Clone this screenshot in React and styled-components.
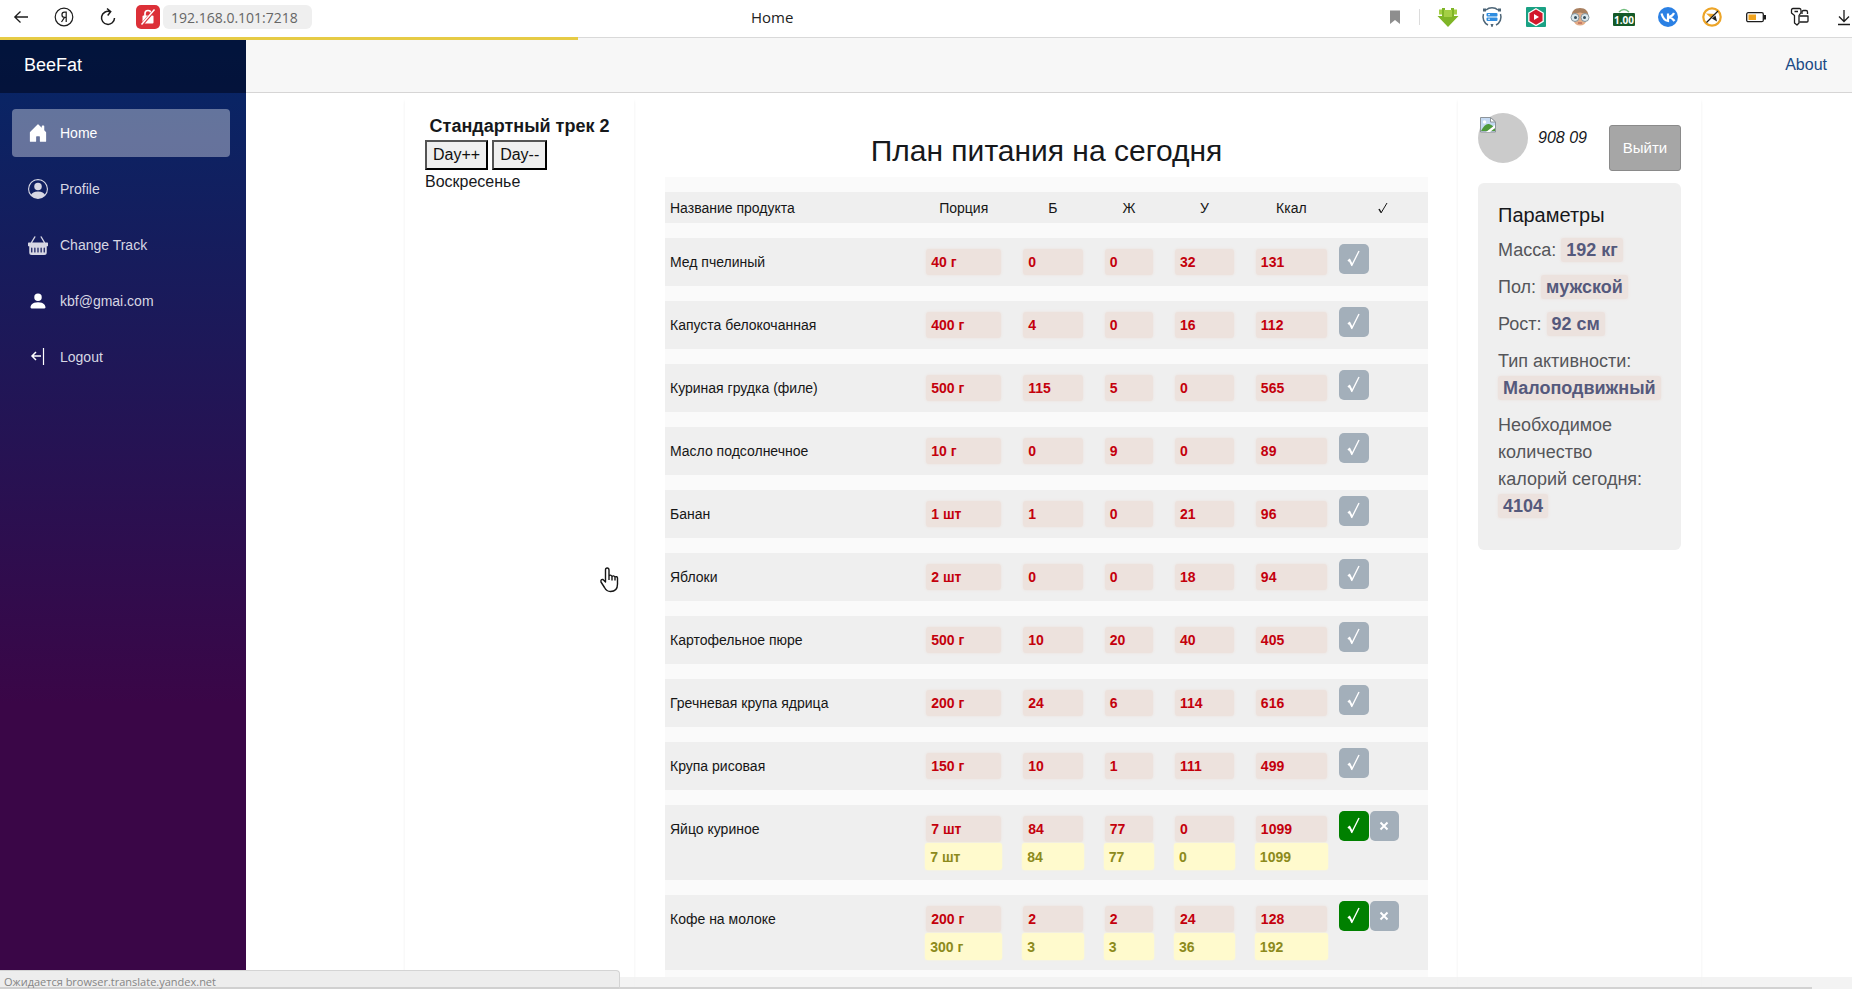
import React from "react";
import styled, { createGlobalStyle } from "styled-components";
import { BsHouseDoorFill, BsPersonCircle, BsPersonFill, BsBasketFill } from "react-icons/bs";

const Global = createGlobalStyle`
  *, *::before, *::after { box-sizing: border-box; }
  html, body, #root { height: 100%; }
  body { margin: 0; background: #fff; color: #16181b; font: 16px/24px "Liberation Sans", Arial, sans-serif; overflow: hidden; }
  h1, h2, h3, p { margin: 0; font-weight: 400; }
  button { font: inherit; color: inherit; cursor: pointer; }
  svg { display: block; flex: none; }
`;

/* Browser frame */
const Window = styled.div`
  display: flex; flex-direction: column; height: 100vh; overflow: hidden; position: relative;
`;
const Chrome = styled.header`
  flex: none; display: grid; grid-template-columns: 83fr auto 117fr; align-items: center;
  height: 38px; padding-bottom: 3px; background: #fff; overflow: hidden;
  border-bottom: 1px solid #d9d9d9; font-family: "Open Sans", "Noto Sans", sans-serif;
`;
const ChromeLeft = styled.div`display: flex; align-items: center; min-width: 0;`;
const ChromeButton = styled.button`
  flex: none; display: grid; place-items: center; width: 44px; height: 24px; padding: 0;
  border: 0; background: none; color: #1c1c1c;
`;
const BackButton = styled(ChromeButton)`width: 42px;`;
const Insecure = styled(ChromeButton)`
  width: 24px; margin-left: 6px; border-radius: 5px; background: #dc3038;
`;
const Address = styled.input`
  width: 149px; height: 24px; margin-left: 3px; padding: 0 4px 0 8px; border: 0; border-radius: 6px;
  background: #efefef; color: #666; font: 14px "Open Sans", "Noto Sans", sans-serif;
`;
const PageTitle = styled.div`color: #222; font-size: 15px;`;
const Extensions = styled.div`
  display: flex; align-items: center; justify-content: flex-end; margin-right: -14px;
`;
const Divider = styled.span`width: 1px; height: 16px; margin: 0 6px 0 2px; background: #dcdcdc;`;
const Loading = styled.div`
  position: absolute; left: 0; top: 37px; width: 31.2%; height: 3px; background: #e6cb45; z-index: 2;
`;

/* Site layout */
const Page = styled.div`flex: 1; display: flex; min-height: 0;`;
const Sidebar = styled.aside`
  flex: none; width: 246px;
  background: linear-gradient(180deg, rgb(5, 39, 103) 0%, #3a0647 70%);
`;
const Brand = styled.a`
  display: flex; align-items: center; height: 55px; padding: 0 24px 2px; background: rgba(0, 4, 22, 0.52);
  color: #fff; font-size: 18px; text-decoration: none;
`;
const Nav = styled.nav`display: flex; flex-direction: column; gap: 8px; padding: 16px 16px 0 12px;`;
const NavItem = styled.a`
  display: flex; align-items: center; gap: 12px; height: 48px; padding: 0 16px; border-radius: 4px;
  color: ${(p) => (p.$active ? "#fff" : "#d7d7e3")}; font-size: 14px; text-decoration: none;
  background: ${(p) => (p.$active ? "rgba(255,255,255,0.37)" : "none")};
`;
const Main = styled.main`flex: 1; min-width: 0; overflow: hidden;`;
const TopRow = styled.div`
  display: flex; align-items: center; justify-content: flex-end; height: 55px; padding: 0 25px 0 32px;
  background: #f7f7f7; border-bottom: 1px solid #d6d5d5;
`;
const TopLink = styled.a`color: #1a4a85; text-decoration: none;`;
const Content = styled.div`padding: 0 24px 0 32px;`;
const Columns = styled.div`
  display: grid; grid-template-columns: 229px 1fr 243px; max-width: 1296px; min-height: 900px; margin: 0 auto;
`;
const Column = styled.section`padding: 20px; box-shadow: 0 8px 3px rgba(0, 0, 0, 0.07);`;

/* Track column */
const TrackTitle = styled.h2`font-size: 18px; line-height: 27px; font-weight: 700; text-align: center; white-space: nowrap;`;
const DayButtons = styled.div`display: flex; gap: 4px;`;
const DayButton = styled.button`
  height: 30px; padding: 1px 6px; border: 2px outset #000; background: #efefef; color: #111;
`;

/* Meal plan */
const Plan = styled.section`padding: 40px 30px 0 31px;`;
const PlanTitle = styled.h1`margin-bottom: 8px; font-size: 30px; line-height: 36px; text-align: center;`;
const Table = styled.table`
  width: 100%; table-layout: fixed; border-collapse: separate; border-spacing: 0 15px;
  background: #fafafa; color: #161616; font-size: 14px; line-height: 28px;
`;
const Th = styled.th`
  width: ${(p) => p.$w}; height: 31px; padding: 0 ${(p) => (p.$left ? 5 : 0)}px; background: #efefef;
  font-weight: 400; text-align: ${(p) => (p.$left ? "left" : "center")};
`;
const Td = styled.td`
  padding: ${(p) => (p.$actions ? "6px 1px" : p.$name ? "10px 5px" : "10px")}; background: #efefef; vertical-align: top;
`;
const Planned = styled.div`
  height: 26px; margin: 1px; padding: 0 5px; border-radius: 3px; background: #ede2dd;
  box-shadow: 0 0 3px #ede2dd; color: #c4000c; font-weight: 700; line-height: 26px;
`;
const Eaten = styled.div`
  height: 27px; padding: 0 5px; border-radius: 3px; background: #fffacd;
  box-shadow: 0 0 2px #fffacd; color: #8c8a1c; font-weight: 700; line-height: 28px;
`;
const Actions = styled.div`display: flex; gap: 1px;`;
const ActionButton = styled.button`
  display: grid; place-items: center; width: ${(p) => (p.$cancel ? 29 : 30)}px; height: 30px; padding: 0; border: 0;
  border-radius: 5px; background: ${(p) => (p.$done ? "#008000" : "#a3afba")}; color: #fff;
`;

/* User column */
const UserRow = styled.div`display: flex; align-items: flex-start; height: 70px;`;
const Avatar = styled.span`
  width: 50px; height: 50px; padding: 4px 2px; border-radius: 50%; background: #cbcbcb;
`;
const UserName = styled.em`flex: 1; margin-left: 10px; line-height: 50px; white-space: nowrap;`;
const ExitButton = styled.button`
  width: 72px; height: 46px; margin-top: 12px; padding: 0; border: 1px solid #8a8a8a; border-radius: 3px;
  background: #a6a6a6; color: #fff; font-size: 15px;
`;
const Card = styled.div`
  padding: 20px; border-radius: 6px; background: #efefef; color: #55565a; font-size: 18px; line-height: 27px;
`;
const CardTitle = styled.h3`margin-bottom: 10px; color: #16181b; font-size: 20px; line-height: 24px;`;
const Param = styled.p`margin-bottom: 10px;`;
const Value = styled.b`
  padding: 2px 5px; border-radius: 2px; background: #ece2de; box-shadow: 0 0 3px #ece2de; color: #55597c; white-space: nowrap;
`;

/* Overlays at the window's lower edge, and the pointer */
const ScrollStrip = styled.div`
  position: absolute; left: 0; right: 0; bottom: 0; height: 12px; padding-right: 40px;
  display: flex; align-items: flex-end; background: rgba(241, 241, 241, 0.85);
`;
const ScrollThumb = styled.div`flex: 1; height: 2px; background: #d2d2d2;`;
const StatusText = styled.div`
  position: absolute; left: 0; bottom: 0; width: 620px; height: 19px; padding: 1px 4px 0; background: #ededed;
  border-top: 1px solid #d4d4d4; border-right: 1px solid #d4d4d4; border-radius: 0 4px 0 0;
  box-shadow: inset 0 -2px #d0d0d0; color: #858585; font: 11px/19px "Open Sans", "Noto Sans", sans-serif;
`;
const Pointer = styled.svg`position: absolute; left: 600px; top: 567px; pointer-events: none;`;

const line = { fill: "none", stroke: "currentColor", strokeWidth: 1.5 };

const ArrowIcon = () => (
  <svg width="20" height="20" viewBox="0 0 20 20" {...line} strokeWidth="1.3"><path d="M17 10H4M9.5 4.500 3.800 10l5.700 5.500" /></svg>
);
const YandexIcon = () => (
  <svg width="20" height="20" viewBox="0 0 20 20" {...line} strokeWidth="1.2">
    <circle cx="10" cy="10" r="8.800" />
    <path d="M12.200 15V5.200h-1.700c-3.400 0-3.400 5.200 0 5.200h1.700M10.500 10.400 7.500 15" />
  </svg>
);
const ReloadIcon = () => (
  <svg width="20" height="20" viewBox="0 0 20 20" {...line}>
    <path d="M12 4.700A6.500 6.500 0 1 0 16.500 11M9 1.500l3.700 3.200-3 3.800" />
  </svg>
);
const LockIcon = () => (
  <svg width="20" height="20" viewBox="0 0 20 20">
    <rect x="4.500" y="8.500" width="11" height="8" rx="1" fill="#fff" />
    <path d="M7 9V6.500a3 3 0 0 1 6 0V9" fill="none" stroke="#fff" strokeWidth="1.700" />
    <path d="M3.500 18 17 2.500" stroke="#dc3038" strokeWidth="3" />
    <path d="M3.500 17.500 16.500 2.500" stroke="#fff" strokeWidth="1.500" />
  </svg>
);
const BookmarkIcon = () => (
  <svg width="20" height="20" viewBox="0 0 20 20"><path d="M5 3.500h10V17l-5-4-5 4z" fill="#8e8e8e" /></svg>
);
const SaveIcon = () => (
  <svg width="22" height="22" viewBox="0 0 22 22">
    <path d="M5 2h3v2h6V2h3v8h4.500L11 21 .5 10H5z" fill="#7fb527" />
    <path d="M2 3.500h3v5H2zM17 3.500h3v5h-3zM7 4h8v7H7z" fill="#a4cf45" />
  </svg>
);
const SyncIcon = () => (
  <svg width="22" height="22" viewBox="0 0 22 22">
    <g fill="none" stroke="#4d6577" strokeWidth="1.500">
      <path d="M5 4a9 9 0 0 1 12 0M19.500 8a9 9 0 0 1-4.500 11M7 19A9 9 0 0 1 2.500 8" />
    </g>
    <path d="M2 2.500h3v3H2zM17 2.500h3v3h-3zM9.500 18h3l-1 3h-1z" fill="#4d6577" />
    <rect x="5.500" y="7" width="11" height="3.500" rx="1" fill="#2f8de0" />
    <rect x="5.500" y="11.500" width="11" height="3.500" rx="1" fill="#2f8de0" />
    <path d="M7 8.700h2M7 13.200h2" stroke="#fff" />
  </svg>
);
const PlayIcon = () => (
  <svg width="22" height="22" viewBox="0 0 22 22">
    <rect x="1" y="1" width="20" height="20" rx="1" fill="#1aa184" />
    <path d="M11 2.800 18.200 7v8.400L11 19.500l-7.200-4.100V7z" fill="#d2182c" stroke="#fff" strokeWidth="1.300" />
    <path d="M9 8v6l5-3z" fill="#fff" />
  </svg>
);
const FaceIcon = () => (
  <svg width="22" height="22" viewBox="0 0 22 22">
    <path d="M3 12C1.500 5 6 2 11 2s9.500 3 8 10z" fill="#a98060" />
    <path d="M4 9q7-5 14 0v5q-2 5.500-7 5.500T4 14z" fill="#e3ac86" />
    <circle cx="6" cy="11.500" r="4" fill="#dbe8ee" stroke="#84949d" />
    <circle cx="16" cy="11.500" r="4" fill="#dbe8ee" stroke="#84949d" />
    <circle cx="6.500" cy="11.500" r="1.500" fill="#354e5d" /><circle cx="15.500" cy="11.500" r="1.500" fill="#354e5d" />
    <path d="M9 17h4" stroke="#a8504a" />
  </svg>
);
const PriceIcon = () => (
  <svg width="22" height="22" viewBox="0 0 22 22">
    <path d="M6 6q5-5 10 0" fill="none" stroke="#70bd7d" strokeWidth="1.500" />
    <rect x="0" y="7" width="22" height="13" rx="1" fill="#145a28" />
    <text x="11" y="17.500" fill="#fff" textAnchor="middle" fontFamily="Open Sans, sans-serif" fontWeight="700" fontSize="10">1.00</text>
  </svg>
);
const VkIcon = () => (
  <svg width="22" height="22" viewBox="0 0 22 22">
    <circle cx="11" cy="11" r="10" fill="#2a80e4" />
    <path d="M4.500 7.500q2 7 6.500 7.500V7.500M17 7q-1.500 3.500-6 4 4 .5 6.500 4" fill="none" stroke="#fff" strokeWidth="2.200" />
  </svg>
);
const TurboIcon = () => (
  <svg width="22" height="22" viewBox="0 0 22 22">
    <circle cx="11" cy="11" r="8.700" fill="#fff" stroke="#eda528" strokeWidth="2.200" />
    <path d="M5 7.500 14 8 10 12z" fill="#eda528" />
    <path d="m11 12.500 3.500-3 1.500 6z" fill="#1e1e1e" />
    <path d="M5.500 16.500 17 5" stroke="#1e1e1e" strokeWidth="1.200" />
  </svg>
);
const BatteryIcon = () => (
  <svg width="22" height="22" viewBox="0 0 22 22">
    <rect x="1.700" y="6.700" width="16.600" height="9" rx="1.500" fill="#fff" stroke="#1c1c1c" strokeWidth="1.300" />
    <path d="M19 9h2v4.500h-2z" fill="#1c1c1c" /><path d="M3.500 8.500H11v5.500H3.500z" fill="#f0a31d" />
  </svg>
);
const KeyIcon = () => (
  <svg width="22" height="22" viewBox="0 0 22 22" {...line} strokeWidth="1.300" strokeLinejoin="round">
    <path d="M4 2.500h6.500q1.500 0 1.500 2v2L10 9.500V17l-2 2-2.500-2V9.500L2.500 7V4q0-1.500 1.500-1.500zM5.500 5.500h3.500" />
    <path d="M13 8V6q0-1.500 1.500-1.500H17q1.500 0 1.500 1.500v2M10.500 10H19v5q0 1-1 1h-7.500" />
  </svg>
);
const DownloadIcon = () => (
  <svg width="22" height="22" viewBox="0 0 22 22" {...line} strokeWidth="1.300"><path d="M11 4v11M6 10.500l5 5 5-5M5 18.500h12" /></svg>
);
const LogoutIcon = () => (
  <svg width="20" height="20" viewBox="0 0 20 20" fill="none" stroke="#fff">
    <path d="M13 9H4M8 5 4 9l4 4" strokeWidth="1.500" /><path d="M15.500 1v17" strokeWidth="1.200" />
  </svg>
);
const BrokenImage = () => (
  <svg width="16" height="16" viewBox="0 0 16 16">
    <path d="M.5.5h10l5 4.500v10H.5z" fill="#c5daf3" stroke="#8d9499" />
    <path d="M10.500.5V5h5z" fill="#fff" stroke="#8d9499" />
    <path d="M1 14q4-8 8-7 4 1 6 5v2z" fill="#4e9a3b" /><path d="m6 15 9-7v3l-5 4z" fill="#fff" />
    <circle cx="4.500" cy="5" r="1.700" fill="#fff" />
  </svg>
);
const CheckIcon = () => (
  <svg width="18" height="20" viewBox="0 0 18 20" fill="none" stroke="currentColor">
    <path d="m3 12 1.500-1L7 16" strokeWidth="2" /><path d="m6.500 17 7.500-15" strokeWidth="1.400" />
  </svg>
);
const HeadCheckIcon = styled.svg`margin: 0 auto;`;
const CrossIcon = () => (
  <svg width="10" height="10" viewBox="0 0 10 10" stroke="currentColor" strokeWidth="2"><path d="m1.500 1.500 7 7M8.500 1.500l-7 7" /></svg>
);

const extensions = [
  ["Загрузка файлов", SaveIcon], ["Синхронизация", SyncIcon], ["Видео", PlayIcon], ["Маска", FaceIcon],
  ["Курс", PriceIcon], ["ВКонтакте", VkIcon], ["Турбо", TurboIcon], ["Батарея", BatteryIcon],
  ["Пароли", KeyIcon], ["Загрузки", DownloadIcon],
];

const links = [
  ["Home", <BsHouseDoorFill size={20} />], ["Profile", <BsPersonCircle size={20} />],
  ["Change Track", <BsBasketFill size={20} />], ["kbf@gmai.com", <BsPersonFill size={20} color="#fff" />],
  ["Logout", <LogoutIcon />],
];

const heads = [["Порция", "12.7%"], ["Б", "10.7%"], ["Ж", "9.2%"], ["У", "10.6%"], ["Ккал", "12.2%"]];

const items = [
  ["Мед пчелиный", ["40 г", 0, 0, 32, 131]],
  ["Капуста белокочанная", ["400 г", 4, 0, 16, 112]],
  ["Куриная грудка (филе)", ["500 г", 115, 5, 0, 565]],
  ["Масло подсолнечное", ["10 г", 0, 9, 0, 89]],
  ["Банан", ["1 шт", 1, 0, 21, 96]],
  ["Яблоки", ["2 шт", 0, 0, 18, 94]],
  ["Картофельное пюре", ["500 г", 10, 20, 40, 405]],
  ["Гречневая крупа ядрица", ["200 г", 24, 6, 114, 616]],
  ["Крупа рисовая", ["150 г", 10, 1, 111, 499]],
  ["Яйцо куриное", ["7 шт", 84, 77, 0, 1099], ["7 шт", 84, 77, 0, 1099]],
  ["Кофе на молоке", ["200 г", 2, 2, 24, 128], ["300 г", 3, 3, 36, 192]],
];

const params = [
  ["Масса", "192 кг"], ["Пол", "мужской"], ["Рост", "92 см"], ["Тип активности", "Малоподвижный"],
  ["Необходимое количество калорий сегодня", "4104"],
];

export default function App() {
  return (
    <Window>
      <Global />
      <Chrome>
        <ChromeLeft>
          <BackButton aria-label="Назад"><ArrowIcon /></BackButton>
          <ChromeButton aria-label="Яндекс"><YandexIcon /></ChromeButton>
          <ChromeButton aria-label="Обновить"><ReloadIcon /></ChromeButton>
          <Insecure aria-label="Не защищено"><LockIcon /></Insecure>
          <Address aria-label="Адрес" defaultValue="192.168.0.101:7218" />
        </ChromeLeft>
        <PageTitle>Home</PageTitle>
        <Extensions>
          <ChromeButton aria-label="Закладка"><BookmarkIcon /></ChromeButton>
          <Divider />
          {extensions.map(([label, Icon]) => (
            <ChromeButton key={label} aria-label={label}><Icon /></ChromeButton>
          ))}
        </Extensions>
      </Chrome>
      <Loading />
      <Page>
        <Sidebar>
          <Brand href="#">BeeFat</Brand>
          <Nav>
            {links.map(([label, icon], i) => (
              <NavItem key={label} href="#" $active={i === 0}>{icon}{label}</NavItem>
            ))}
          </Nav>
        </Sidebar>
        <Main>
          <TopRow><TopLink href="#">About</TopLink></TopRow>
          <Content>
            <Columns>
              <Column>
                <TrackTitle>Стандартный трек 2</TrackTitle>
                <DayButtons><DayButton>Day++</DayButton><DayButton>Day--</DayButton></DayButtons>
                <p>Воскресенье</p>
              </Column>
              <Plan>
                <PlanTitle>План питания на сегодня</PlanTitle>
                <Table>
                  <thead>
                    <tr>
                      <Th $left $w="32.8%">Название продукта</Th>
                      {heads.map(([label, w]) => <Th key={label} $w={w}>{label}</Th>)}
                      <Th $w="11.8%" aria-label="Съедено">
                        <HeadCheckIcon width="12" height="12" viewBox="0 0 12 12" fill="none" stroke="currentColor">
                          <path d="M2 7 4 10.500" strokeWidth="1.500" /><path d="M4 11 10 1" />
                        </HeadCheckIcon>
                      </Th>
                    </tr>
                  </thead>
                  <tbody>
                    {items.map(([name, plan, eaten]) => (
                      <tr key={name}>
                        <Td $name>{name}</Td>
                        {plan.map((v, i) => (
                          <Td key={i}><Planned>{v}</Planned>{eaten && <Eaten>{eaten[i]}</Eaten>}</Td>
                        ))}
                        <Td $actions>
                          <Actions>
                            <ActionButton $done={!!eaten} aria-label="Съедено"><CheckIcon /></ActionButton>
                            {eaten && <ActionButton $cancel aria-label="Отменить"><CrossIcon /></ActionButton>}
                          </Actions>
                        </Td>
                      </tr>
                    ))}
                  </tbody>
                </Table>
              </Plan>
              <Column>
                <UserRow>
                  <Avatar><BrokenImage /></Avatar>
                  <UserName>908 09</UserName>
                  <ExitButton>Выйти</ExitButton>
                </UserRow>
                <Card>
                  <CardTitle>Параметры</CardTitle>
                  {params.map(([label, value]) => (
                    <Param key={label}>{label}: <Value>{value}</Value></Param>
                  ))}
                </Card>
              </Column>
            </Columns>
          </Content>
        </Main>
      </Page>
      <ScrollStrip><ScrollThumb /></ScrollStrip>
      <StatusText>Ожидается browser.translate.yandex.net</StatusText>
      <Pointer width="20" height="26" viewBox="0 0 20 26" fill="#fff" stroke="#161616" strokeWidth="1.400" strokeLinejoin="round">
        <path d="M5.500 15V3q0-2 1.700-2T9 3v6q1.500-2 3 .5 1.500-1.500 3 .5 2-1 2.500 1v6q0 7.500-7 7.500-4 0-6-4L1 15q-.5-3 2-2.500zM9 9v4M12 9.500v4M15 10v3.500" />
      </Pointer>
    </Window>
  );
}
